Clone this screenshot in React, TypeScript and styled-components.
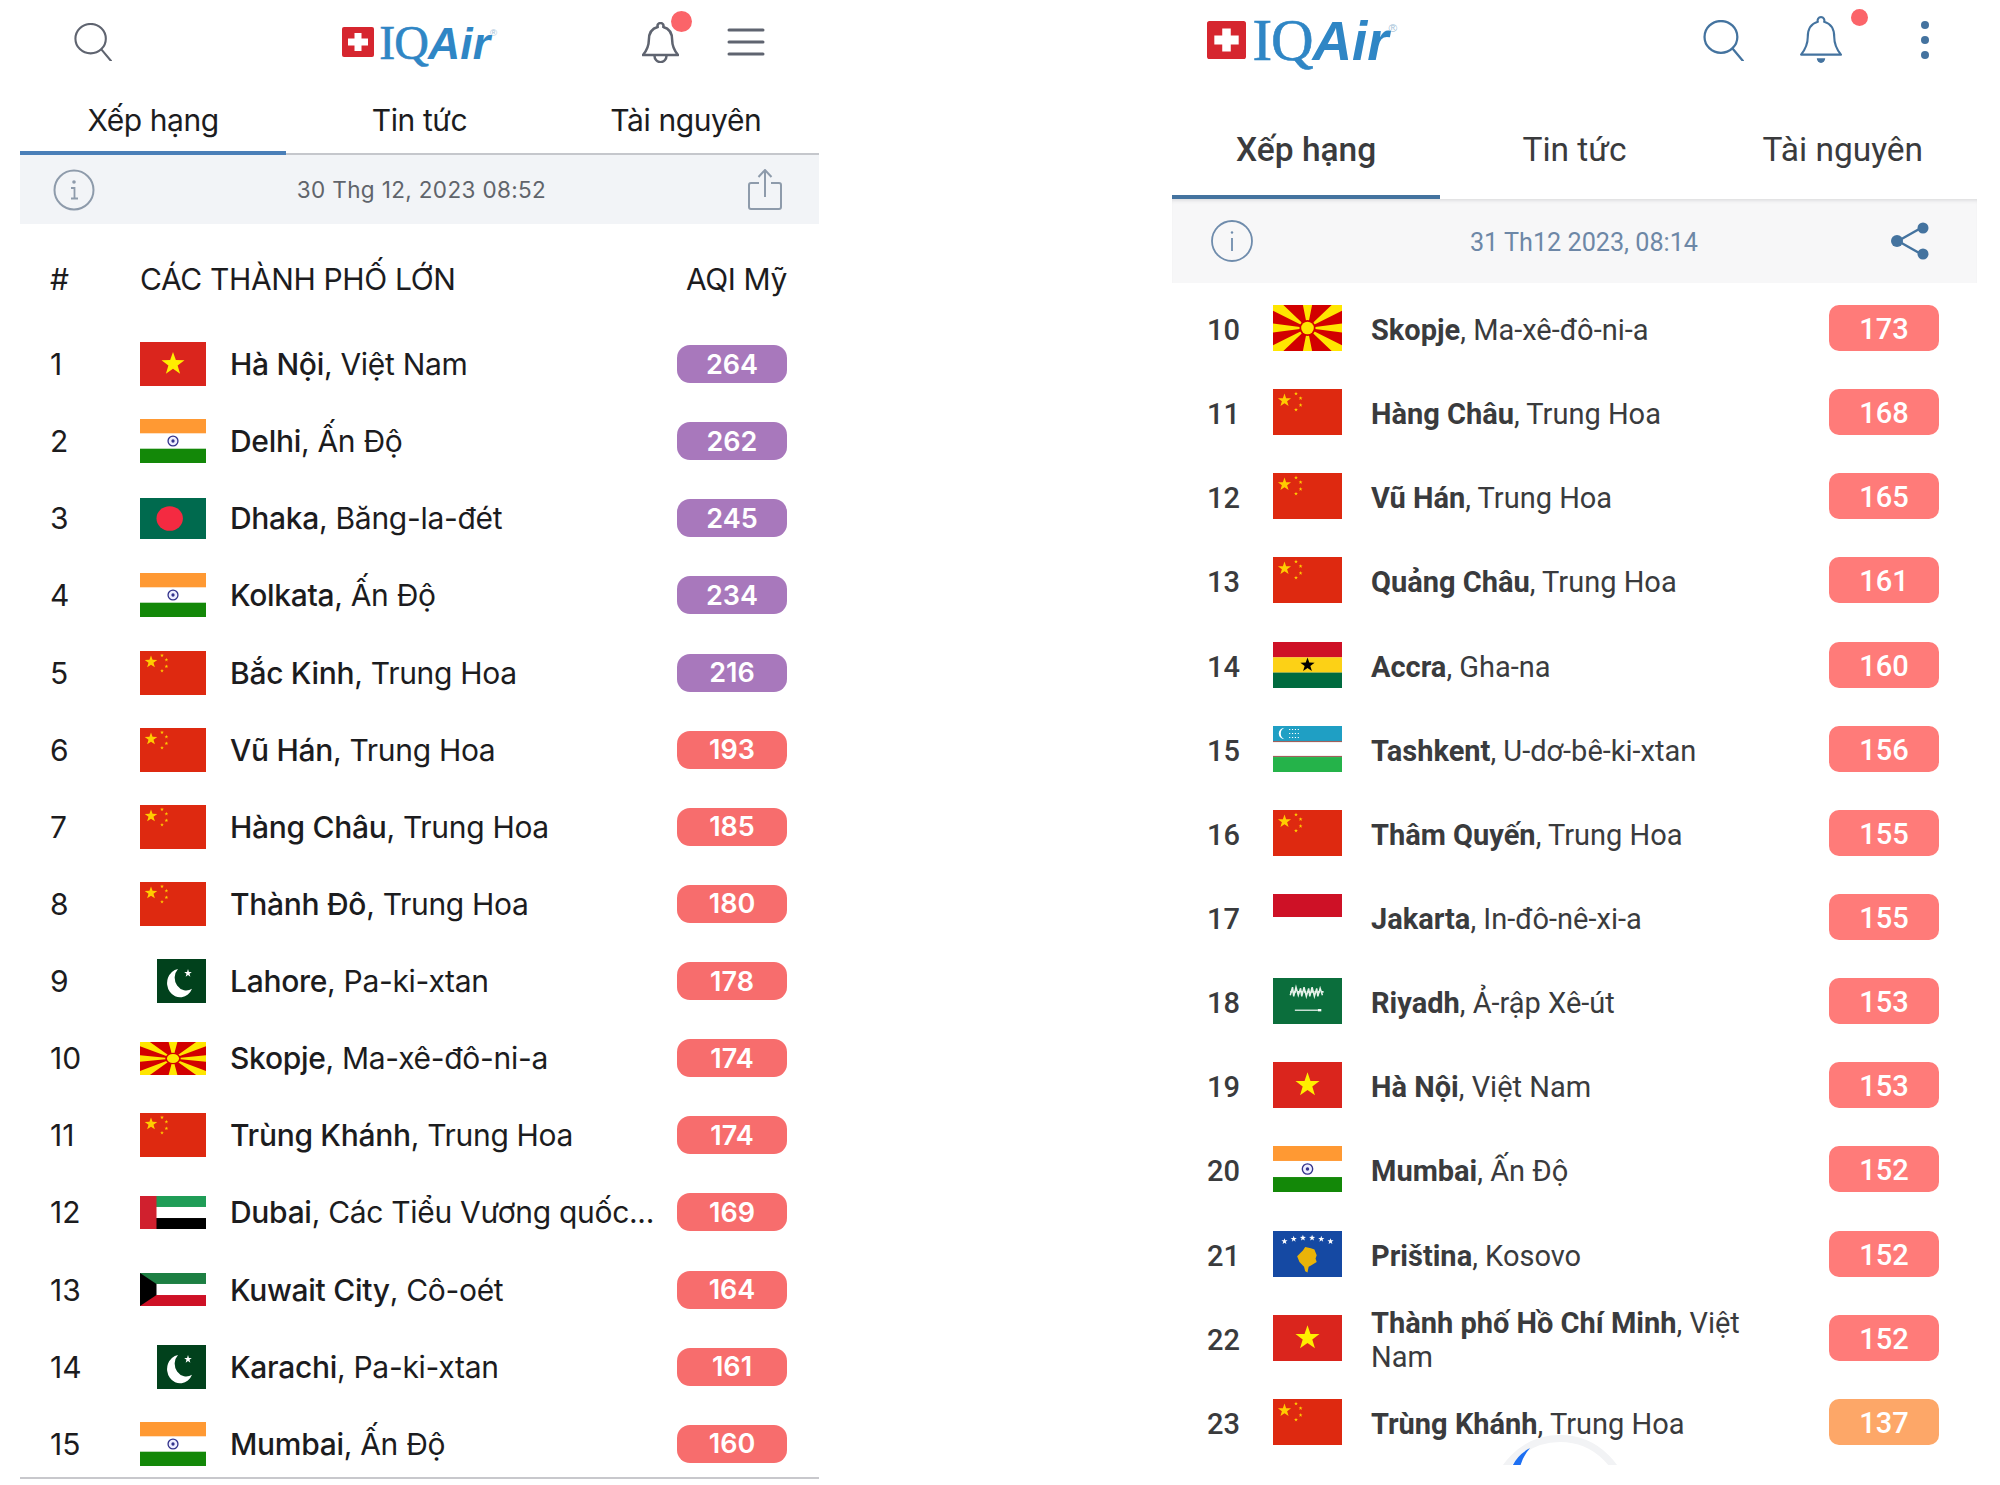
import styled, { createGlobalStyle } from "styled-components";

const GlobalStyle = createGlobalStyle`
    html, body {
        margin: 0;
        padding: 0;
        background: #fff;
    }
`;

const Page = styled.div`
    width: 2000px;
    height: 1485px;
    display: flex;
    justify-content: space-between;
    padding: 0 23px 0 20px;
    box-sizing: border-box;
    overflow: hidden;
`;

/* left phone */
const LeftPanel = styled.section`
    width: 799px;
    height: 1477px;
    border-bottom: 2px solid #c8c8cc;
    box-sizing: content-box;
    overflow: hidden;
    font-family: Inter, "Liberation Sans", sans-serif;
    color: #1c1c1e;
`;

const LeftTop = styled.header`
    height: 80px;
    padding-top: 4px;
    box-sizing: border-box;
    display: grid;
    grid-template-columns: 54px 38px 230px 300px 37px 48px 38px;
    align-items: center;
`;

const Logo = styled.div<{ $size: number }>`
    display: flex;
    align-items: center;
    gap: ${(p) => p.$size * 0.11}px;
    color: #2f86c5;
    line-height: 1;
    white-space: nowrap;
    font-size: ${(p) => p.$size}px;
`;

const LogoSerif = styled.span`
    font-family: "Liberation Serif", serif;
    letter-spacing: -0.02em;
    -webkit-text-stroke: 0.6px #2f86c5;
`;

const LogoAir = styled.span`
    font-family: "Liberation Sans", sans-serif;
    font-weight: 700;
    font-style: italic;
    font-size: 0.93em;
`;

const LogoMark = styled.sup`
    font-family: "Liberation Sans", sans-serif;
    font-size: 0.2em;
    color: #9fbfd8;
    vertical-align: 2.4em;
    line-height: 0;
`;

const BellWrap = styled.div`
    position: relative;
    display: flex;
`;

const Dot = styled.span<{ $size: number; $top: number; $right: number }>`
    position: absolute;
    width: ${(p) => p.$size}px;
    height: ${(p) => p.$size}px;
    top: ${(p) => p.$top}px;
    right: ${(p) => p.$right}px;
    border-radius: 50%;
    background: #fb6469;
`;

const LeftTabs = styled.nav`
    height: 75px;
    display: grid;
    grid-template-columns: repeat(3, 1fr);
    border-bottom: 2px solid #c5c7cc;
    box-sizing: border-box;
`;

const LeftTab = styled.div<{ $active?: boolean }>`
    display: flex;
    align-items: center;
    justify-content: center;
    padding-top: 8px;
    font-size: 30px;
    letter-spacing: -0.4px;
    color: #1c1c1e;
    height: 75px;
    box-sizing: border-box;
    border-bottom: 4px solid ${(p) => (p.$active ? "#4a7fb8" : "transparent")};
`;

const LeftBar = styled.div`
    height: 69px;
    display: flex;
    align-items: center;
    justify-content: space-between;
    padding: 0 37px 0 33px;
    background: #f2f4f7;
`;

const LeftDate = styled.span`
    font-size: 22.5px;
    letter-spacing: 0.35px;
    color: #60646b;
`;

const LeftHead = styled.div`
    height: 101.5px;
    padding: 8px 32px 0 30px;
    box-sizing: border-box;
    display: grid;
    grid-template-columns: 90px 1fr auto;
    align-items: center;
    font-size: 30px;
    letter-spacing: -0.35px;
`;

const LeftRow = styled.div`
    height: 77.14px;
    padding: 0 32px 0 30px;
    display: grid;
    grid-template-columns: 90px 66px 1fr 110px;
    align-items: center;
    font-size: 30px;
`;

const LeftName = styled.div`
    padding: 0 0 0 24px;
    white-space: nowrap;
    letter-spacing: -0.3px;

    strong {
        font-weight: 500;
    }
`;

const FlagSlot = styled.div<{ $top?: boolean; $height: number }>`
    height: ${(p) => p.$height}px;
    display: flex;
    justify-content: flex-end;
    align-items: ${(p) => (p.$top ? "flex-start" : "center")};
`;

const FlagSvg = styled.svg<{ $w: number; $h: number }>`
    display: block;
    width: ${(p) => p.$w}px;
    height: ${(p) => p.$h}px;
`;

const LeftBadge = styled.div<{ $color: string }>`
    height: 38px;
    border-radius: 13px;
    background: ${(p) => p.$color};
    color: #fff;
    font-size: 27px;
    font-weight: 600;
    display: flex;
    align-items: center;
    justify-content: center;
`;

/* right phone */
const RightPanel = styled.section`
    position: relative;
    width: 805px;
    height: 1465px;
    overflow: hidden;
    font-family: Roboto, "Liberation Sans", sans-serif;
    color: #3a3b3d;
`;

const RightTop = styled.header`
    height: 100px;
    display: grid;
    grid-template-columns: 35px 496px 41px 56px 42px 79px 8px;
    align-items: center;
    padding-bottom: 20px;
    box-sizing: border-box;
`;

const RightTabs = styled.nav`
    height: 99px;
    display: grid;
    grid-template-columns: repeat(3, 1fr);
`;

const RightTab = styled.div<{ $active?: boolean }>`
    display: flex;
    align-items: center;
    justify-content: center;
    padding-top: 4px;
    font-size: 33.5px;
    font-weight: ${(p) => (p.$active ? 500 : 400)};
    box-sizing: border-box;
    border-bottom: 4px solid ${(p) => (p.$active ? "#44739f" : "transparent")};
`;

const RightBar = styled.div`
    height: 84px;
    display: flex;
    align-items: center;
    justify-content: space-between;
    padding: 0 48px 0 39px;
    background: #f7f7f8;
    box-shadow: inset 0 4px 4px -3px #d4d4d6;
`;

const RightDate = styled.span`
    margin-left: 25px;
    padding-top: 2px;
    font-size: 25.2px;
    color: #6d87a6;
`;

const RightList = styled.div`
    padding-top: 3px;
`;

const RightRow = styled.div`
    height: 84.15px;
    padding: 0 38px 0 35px;
    display: grid;
    grid-template-columns: 66px 69px 1fr 110px;
    align-items: center;
    font-size: 29px;
    font-weight: 400;
`;

const RightNum = styled.div`
    font-weight: 500;
    padding-top: 4px;
    font-size: 29px;
`;

const RightName = styled.div`
    padding: 4px 50px 0 29px;
    line-height: 34px;

    strong {
        font-weight: 700;
    }
`;

const RightBadge = styled.div<{ $color: string }>`
    height: 46px;
    padding-top: 2px;
    box-sizing: border-box;
    border-radius: 10px;
    background: ${(p) => p.$color};
    color: #fff;
    font-size: 29px;
    font-weight: 500;
    display: flex;
    align-items: center;
    justify-content: center;
`;

const Spinner = styled.svg`
    position: absolute;
    left: 318px;
    top: 1434px;
    width: 140px;
    height: 140px;
`;

/* icons */
const SearchIcon = ({ color, size }: { color: string; size: number }) => (
    <svg width={size} height={size} viewBox="0 0 40 40" fill="none" stroke={color} strokeWidth="2.200">
        <ellipse cx="17.5" cy="16.5" rx="16" ry="15.5" />
        <path d="M29 28l10 12" strokeLinecap="round" />
    </svg>
);

const BELL_BODY =
    "M20 1a3.400 3.400 0 0 1 3 4.600c6.500 1.800 9.600 7.400 9.600 14.500 0 7 2 11.500 6.400 16.900H1c4.400-5.400 6.400-9.900 6.400-16.900 0-7.100 3.100-12.700 9.600-14.500A3.400 3.400 0 0 1 20 1z";

const OutlineBell = () => (
    <svg width="37" height="41" viewBox="0 0 40 46" fill="none" stroke="#5f6470" strokeWidth="2.700" preserveAspectRatio="none">
        <path d={BELL_BODY} strokeLinejoin="round" />
        <path d="M13.500 38a6.500 7 0 0 0 13 0" />
    </svg>
);

const FilledBell = () => (
    <svg width="42" height="48" viewBox="0 0 40 46" fill="none" stroke="#44739f" strokeWidth="2" preserveAspectRatio="none">
        <path d={BELL_BODY} strokeLinejoin="round" />
        <path d="M16 40.500h8a4 4.500 0 0 1-8 0z" fill="#44739f" stroke="none" />
    </svg>
);

const MenuIcon = () => (
    <svg width="38" height="28" viewBox="0 0 38 28" stroke="#5f6470" strokeWidth="3" strokeLinecap="round">
        <path d="M2 2h34M2 14h34M2 26h34" />
    </svg>
);

const Kebab = () => (
    <svg width="8" height="38" viewBox="0 0 8 38" fill="#44739f">
        <circle cx="4" cy="4" r="4" />
        <circle cx="4" cy="19" r="4" />
        <circle cx="4" cy="34" r="4" />
    </svg>
);

const InfoSerif = () => (
    <svg width="42" height="42" viewBox="0 0 42 42" fill="none" stroke="#8e9bab" strokeWidth="2">
        <circle cx="21" cy="21" r="19.500" />
        <path d="M18 19h3.500v10M18 29.500h7" strokeWidth="1.800" />
        <circle cx="21" cy="13" r="1.800" fill="#8e9bab" stroke="none" />
    </svg>
);

const InfoThin = () => (
    <svg width="42" height="42" viewBox="0 0 42 42" fill="none" stroke="#6f8cac" strokeWidth="1.800">
        <circle cx="21" cy="21" r="20" />
        <path d="M21 18v13" />
        <circle cx="21" cy="12.500" r="1.200" fill="#6f8cac" stroke="none" />
    </svg>
);

const ShareUp = () => (
    <svg width="34" height="42" viewBox="0 0 34 42" fill="none" stroke="#8e9bab" strokeWidth="2">
        <path d="M11 14H3a2 2 0 0 0-2 2v22a2 2 0 0 0 2 2h28a2 2 0 0 0 2-2V16a2 2 0 0 0-2-2h-8" />
        <path d="M17 28V1M10.500 8L17 1l6.500 7" />
    </svg>
);

const ShareDots = () => (
    <svg width="39" height="38" viewBox="0 0 39 38" fill="#44739f" stroke="#44739f" strokeWidth="2.500">
        <path d="M8 19L31 6M8 19l23 13" />
        <circle cx="7" cy="19" r="6" stroke="none" />
        <circle cx="33" cy="6" r="5.500" stroke="none" />
        <circle cx="33" cy="32" r="5.500" stroke="none" />
    </svg>
);

const LogoCross = ({ w, h }: { w: number; h: number }) => (
    <svg width={w} height={h} viewBox="0 0 32 30" preserveAspectRatio="none">
        <rect width="32" height="30" rx="2" fill="#d6262f" />
        <path d="M12.500 6h7v5.500H26v7h-6.500V24h-7v-5.500H6v-7h6.500z" fill="#fff" />
    </svg>
);

/* flags, all drawn on a 60x40 field and stretched to their slot */
const star = (cx: number, cy: number, r: number) => {
    const pts: string[] = [];
    for (let i = 0; i < 10; i++) {
        const a = -Math.PI / 2 + (i * Math.PI) / 5;
        const rad = i % 2 === 0 ? r : r * 0.4;
        pts.push(`${(cx + rad * Math.cos(a)).toFixed(2)},${(cy + rad * Math.sin(a)).toFixed(2)}`);
    }
    return pts.join(" ");
};

const flagArt: Record<string, React.ReactNode> = {
    vn: (
        <>
            <rect width="60" height="40" fill="#da251d" />
            <polygon points={star(30, 20, 11)} fill="#ffee00" />
        </>
    ),
    cn: (
        <>
            <rect width="60" height="40" fill="#de2910" />
            <polygon points={star(10, 10, 6)} fill="#ffcc00" />
            <polygon points={star(20, 4, 1.800)} fill="#ffcc00" />
            <polygon points={star(24, 8, 1.800)} fill="#ffcc00" />
            <polygon points={star(24, 14, 1.800)} fill="#ffcc00" />
            <polygon points={star(20, 18, 1.800)} fill="#ffcc00" />
        </>
    ),
    in: (
        <>
            <rect width="60" height="40" fill="#fff" />
            <rect width="60" height="13" fill="#ff9933" />
            <rect y="27" width="60" height="13" fill="#138808" />
            <circle cx="30" cy="20" r="4.500" fill="#eef" stroke="#34348c" strokeWidth="1.200" />
            <circle cx="30" cy="20" r="1.500" fill="#34348c" />
        </>
    ),
    bd: (
        <>
            <rect width="60" height="40" fill="#006a4e" />
            <circle cx="27" cy="20" r="12" fill="#f42a41" />
        </>
    ),
    pk: (
        <>
            <rect width="60" height="40" fill="#01411c" />
            <path d="M32 9a13 13 0 1 0 14 18 11.500 11.500 0 0 1-14-18z" fill="#fff" />
            <polygon points={star(42, 13, 4)} fill="#fff" />
        </>
    ),
    mk: (
        <>
            <rect width="60" height="40" fill="#d20000" />
            <path d="M0 0h9l21 20L0 5zM60 0h-9L30 20 60 5zM0 40h9l21-20L0 35zM60 40h-9L30 20l30 15zM26 0h8l-4 20zM26 40h8l-4-20zM0 16v8l30-4zM60 16v8l-30-4z" fill="#ffe600" />
            <circle cx="30" cy="20" r="7" fill="#d20000" />
            <circle cx="30" cy="20" r="5.500" fill="#ffe600" />
        </>
    ),
    ae: (
        <>
            <rect width="60" height="40" fill="#fff" />
            <rect width="60" height="13.300" fill="#1f9d57" />
            <rect y="26.700" width="60" height="13.300" fill="#000" />
            <rect width="15" height="40" fill="#d0202e" />
        </>
    ),
    kw: (
        <>
            <rect width="60" height="40" fill="#fff" />
            <rect width="60" height="13.300" fill="#1d7f43" />
            <rect y="26.700" width="60" height="13.300" fill="#ce1126" />
            <polygon points="0,0 15,13.300 15,26.700 0,40" fill="#000" />
        </>
    ),
    gh: (
        <>
            <rect width="60" height="13.400" fill="#ce1126" />
            <rect y="13.300" width="60" height="13.400" fill="#fcd116" />
            <rect y="26.600" width="60" height="13.400" fill="#006b3f" />
            <polygon points={star(30, 20, 6.500)} fill="#000" />
        </>
    ),
    uz: (
        <>
            <rect width="60" height="40" fill="#fff" />
            <rect width="60" height="13.500" fill="#1f9fc4" />
            <rect y="13" width="60" height="1" fill="#a0605a" />
            <rect y="26" width="60" height="1" fill="#a0605a" />
            <rect y="27" width="60" height="13" fill="#25b34a" />
            <path d="M10 1.500a5.500 5.500 0 0 0 0 10 5 5 0 0 1 0-10z" fill="#fff" />
            <path d="M14 3h9M14 6.500h9M14 10h9" stroke="#fff" strokeWidth="1" strokeDasharray="1 1.500" />
        </>
    ),
    id: <rect width="60" height="40" fill="#ce1126" />,
    sa: (
        <>
            <rect width="60" height="40" fill="#0b6e3c" />
            <path d="M15 15l2-7 1 8 2-8 2 7 2-6 1 7 2-8 2 8 2-7 1 7 2-8 2 8 2-7 1 7 2-7 2 6" fill="none" stroke="#e6f2ea" strokeWidth="1.300" />
            <path d="M15 12h30" stroke="#e6f2ea" strokeWidth="1.500" strokeDasharray="2 1" />
            <path d="M19 28h20" stroke="#fff" strokeWidth="1" />
            <rect x="39" y="27" width="3" height="2" fill="#fff" />
        </>
    ),
    xk: (
        <>
            <rect width="60" height="40" fill="#1549a3" />
            {[10, 18, 26, 34, 42, 50].map((x, i) => (
                <polygon key={x} points={star(x, [9, 7, 6, 6, 7, 9][i], 2.800)} fill="#fff" />
            ))}
            <path d="M28 14l5 1 3 1 2 5-1 3 1 3-5 3-2 1-1 5-2-1-1-4-4-4-2-5 3-3 2-2z" fill="#eab308" />
        </>
    ),
};

const leftFlagSize: Record<string, [number, number]> = {
    bd: [66, 41],
    pk: [49, 44],
    mk: [66, 33],
    ae: [66, 33],
    kw: [66, 33],
};

const Flag = ({ code, w, h }: { code: string; w: number; h: number }) => (
    <FlagSvg $w={w} $h={h} viewBox={code === "pk" && w < 60 ? "11 0 49 40" : "0 0 60 40"} preserveAspectRatio="none">
        {flagArt[code]}
    </FlagSvg>
);

const PURPLE = "#a878bc";
const RED = "#f76d6d";

const leftRows: [number, string, string, string, number, string][] = [
    [1, "vn", "Hà Nội", "Việt Nam", 264, PURPLE],
    [2, "in", "Delhi", "Ấn Độ", 262, PURPLE],
    [3, "bd", "Dhaka", "Băng-la-đét", 245, PURPLE],
    [4, "in", "Kolkata", "Ấn Độ", 234, PURPLE],
    [5, "cn", "Bắc Kinh", "Trung Hoa", 216, PURPLE],
    [6, "cn", "Vũ Hán", "Trung Hoa", 193, RED],
    [7, "cn", "Hàng Châu", "Trung Hoa", 185, RED],
    [8, "cn", "Thành Đô", "Trung Hoa", 180, RED],
    [9, "pk", "Lahore", "Pa-ki-xtan", 178, RED],
    [10, "mk", "Skopje", "Ma-xê-đô-ni-a", 174, RED],
    [11, "cn", "Trùng Khánh", "Trung Hoa", 174, RED],
    [12, "ae", "Dubai", "Các Tiểu Vương quốc...", 169, RED],
    [13, "kw", "Kuwait City", "Cô-oét", 164, RED],
    [14, "pk", "Karachi", "Pa-ki-xtan", 161, RED],
    [15, "in", "Mumbai", "Ấn Độ", 160, RED],
];

const PINK = "#ff7b79";
const ORANGE = "#fda768";

const rightRows: [number, string, string, string, number, string][] = [
    [10, "mk", "Skopje", "Ma-xê-đô-ni-a", 173, PINK],
    [11, "cn", "Hàng Châu", "Trung Hoa", 168, PINK],
    [12, "cn", "Vũ Hán", "Trung Hoa", 165, PINK],
    [13, "cn", "Quảng Châu", "Trung Hoa", 161, PINK],
    [14, "gh", "Accra", "Gha-na", 160, PINK],
    [15, "uz", "Tashkent", "U-dơ-bê-ki-xtan", 156, PINK],
    [16, "cn", "Thâm Quyến", "Trung Hoa", 155, PINK],
    [17, "id", "Jakarta", "In-đô-nê-xi-a", 155, PINK],
    [18, "sa", "Riyadh", "Ả-rập Xê-út", 153, PINK],
    [19, "vn", "Hà Nội", "Việt Nam", 153, PINK],
    [20, "in", "Mumbai", "Ấn Độ", 152, PINK],
    [21, "xk", "Priština", "Kosovo", 152, PINK],
    [22, "vn", "Thành phố Hồ Chí Minh", "Việt Nam", 152, PINK],
    [23, "cn", "Trùng Khánh", "Trung Hoa", 137, ORANGE],
];

function App() {
    return (
        <Page>
            <GlobalStyle />
            <LeftPanel>
                <LeftTop>
                    <span />
                    <SearchIcon color="#5f6470" size={38} />
                    <span />
                    <Logo $size={48}>
                        <LogoCross w={32} h={30} />
                        <span>
                            <LogoSerif>IQ</LogoSerif>
                            <LogoAir>Air</LogoAir>
                            <LogoMark>®</LogoMark>
                        </span>
                    </Logo>
                    <BellWrap>
                        <OutlineBell />
                        <Dot $size={21} $top={-11} $right={-13} />
                    </BellWrap>
                    <span />
                    <MenuIcon />
                </LeftTop>
                <LeftTabs>
                    <LeftTab $active>Xếp hạng</LeftTab>
                    <LeftTab>Tin tức</LeftTab>
                    <LeftTab>Tài nguyên</LeftTab>
                </LeftTabs>
                <LeftBar>
                    <InfoSerif />
                    <LeftDate>30 Thg 12, 2023 08:52</LeftDate>
                    <ShareUp />
                </LeftBar>
                <LeftHead>
                    <span>#</span>
                    <span>CÁC THÀNH PHỐ LỚN</span>
                    <span>AQI Mỹ</span>
                </LeftHead>
                {leftRows.map(([n, code, city, country, aqi, color]) => {
                    const [w, h] = leftFlagSize[code] || [66, 44];
                    return (
                        <LeftRow key={n}>
                            <span>{n}</span>
                            <FlagSlot $height={44}>
                                <Flag code={code} w={w} h={h} />
                            </FlagSlot>
                            <LeftName>
                                <strong>{city}</strong>, {country}
                            </LeftName>
                            <LeftBadge $color={color}>{aqi}</LeftBadge>
                        </LeftRow>
                    );
                })}
            </LeftPanel>

            <RightPanel>
                <RightTop>
                    <span />
                    <Logo $size={59}>
                        <LogoCross w={39} h={38} />
                        <span>
                            <LogoSerif>IQ</LogoSerif>
                            <LogoAir>Air</LogoAir>
                            <LogoMark>®</LogoMark>
                        </span>
                    </Logo>
                    <SearchIcon color="#44739f" size={41} />
                    <span />
                    <BellWrap>
                        <FilledBell />
                        <Dot $size={17} $top={-7} $right={-26} />
                    </BellWrap>
                    <span />
                    <Kebab />
                </RightTop>
                <RightTabs>
                    <RightTab $active>Xếp hạng</RightTab>
                    <RightTab>Tin tức</RightTab>
                    <RightTab>Tài nguyên</RightTab>
                </RightTabs>
                <RightBar>
                    <InfoThin />
                    <RightDate>31 Th12 2023, 08:14</RightDate>
                    <ShareDots />
                </RightBar>
                <RightList>
                    {rightRows.map(([n, code, city, country, aqi, color]) => (
                        <RightRow key={n}>
                            <RightNum>{n}</RightNum>
                            <FlagSlot $height={46} $top={code === "id"}>
                                <Flag code={code} w={69} h={code === "id" ? 23 : 46} />
                            </FlagSlot>
                            <RightName>
                                <strong>{city}</strong>, {country}
                            </RightName>
                            <RightBadge $color={color}>{aqi}</RightBadge>
                        </RightRow>
                    ))}
                </RightList>
                <Spinner viewBox="0 0 140 140">
                    <circle cx="70" cy="70" r="65.500" fill="none" stroke="#f2f3f5" strokeWidth="7" />
                    <path d="M40 14Q27 21 22 33L30 33Q33 22 40 14z" fill="#1d6ff2" />
                </Spinner>
            </RightPanel>
        </Page>
    );
}

export default App;
